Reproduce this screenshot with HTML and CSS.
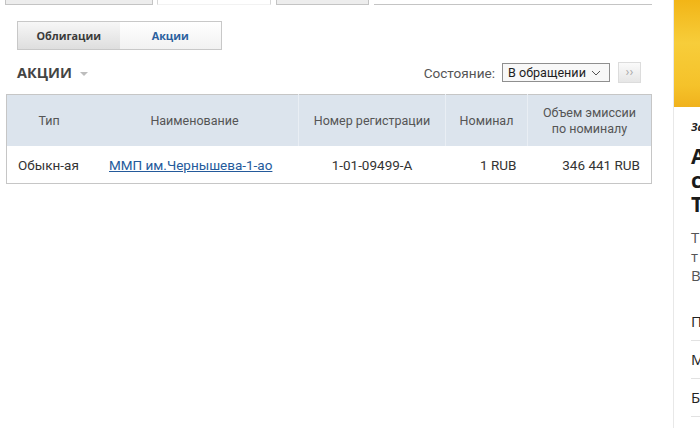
FILE: index.html
```html
<!DOCTYPE html>
<html>
<head>
    <title>Акции</title>
    <link rel="stylesheet" href="styles.css">
</head>
<body>
    <div class="page">
        <div class="main">
            <!-- Top tabs (cut off by the viewport) -->
            <div class="top-tabs">
                <div class="top-tab first"></div>
                <div class="top-tab active"></div>
                <div class="top-tab"></div>
                <div class="top-line"></div>
            </div>

            <!-- Bonds / Shares switch -->
            <div class="switch">
                <div class="switch-item">Облигации</div>
                <div class="switch-item selected">Акции</div>
            </div>

            <!-- Heading and filter -->
            <div class="toolbar">
                <div class="section-title">АКЦИИ <span class="caret"></span></div>
                <div class="filter">
                    <span class="filter-label">Состояние:</span>
                    <div class="select">
                        <span class="select-value">В обращении</span>
                        <svg width="10" height="6" viewBox="0 0 10 6"><path d="M1 1 L5 5 L9 1" fill="none" stroke="#555" stroke-width="1"/></svg>
                    </div>
                    <div class="go-btn">&rsaquo;&rsaquo;</div>
                </div>
            </div>

            <!-- Results table -->
            <table class="issues">
                <thead>
                    <tr>
                        <th class="col-type">Тип</th>
                        <th class="col-name">Наименование</th>
                        <th class="col-reg">Номер регистрации</th>
                        <th class="col-nom">Номинал</th>
                        <th class="col-vol">Объем эмиссии<br>по номиналу</th>
                    </tr>
                </thead>
                <tbody>
                    <tr>
                        <td class="type">Обыкн-ая</td>
                        <td class="name"><a href="#">ММП им.Чернышева-1-ао</a></td>
                        <td class="reg">1-01-09499-A</td>
                        <td class="num">1 RUB</td>
                        <td class="num">346 441 RUB</td>
                    </tr>
                </tbody>
            </table>
        </div>

        <!-- Side banner / news column -->
        <div class="aside">
            <div class="banner"></div>
            <div class="aside-body">
                <div class="logo">За</div>
                <div class="aside-title">А<br>с<br>Т</div>
                <div class="aside-text">Т<br>т<br>В</div>
                <ul class="aside-list">
                    <li>П</li>
                    <li>М</li>
                    <li>Б</li>
                    <li>С</li>
                </ul>
            </div>
        </div>
    </div>
</body>
</html>
```

FILE: styles.css
```css
/* General Styles */
body {
    margin: 0;
    padding: 0;
    background-color: #ffffff;
    font-family: Roboto, "Noto Sans", sans-serif;
    color: #333333;
}

.page {
    display: flex;
    width: 700px;
    height: 428px;
    overflow: hidden;
}

.main {
    width: 646px;
    padding-left: 6px;
    flex-shrink: 0;
}

/* Top tabs, only their lower edge is visible */
.top-tabs {
    display: flex;
    align-items: flex-end;
    height: 5px;
    overflow: hidden;
    margin-left: -1px;
}

.top-tab {
    height: 30px;
    width: 93px;
    border: 1px solid #c4c4c4;
    background-color: #ededed;
    margin-right: 5px;
    box-sizing: border-box;
}

.top-tab.first {
    width: 148px;
    margin-right: 4px;
}

.top-tab.active {
    width: 114px;
    background-color: #ffffff;
    border-color: #d6d6d6;
    border-bottom-color: #f2f2f2;
}

.top-line {
    flex: 1;
    height: 1px;
    background-color: #c4c4c4;
}

/* Switch */
.switch {
    display: flex;
    width: 205px;
    height: 29px;
    margin: 16px 0 0 11px;
    border: 1px solid #c8c8c8;
    box-sizing: border-box;
}

.switch-item {
    flex: 1;
    display: flex;
    align-items: center;
    justify-content: center;
    font-family: "Open Sans", sans-serif;
    font-weight: bold;
    font-size: 10.8px;
    color: #3a3a3a;
    background: linear-gradient(#f7f7f7, #dedede);
}

.switch-item.selected {
    color: #2b5f9e;
    background: linear-gradient(#ffffff, #f1f1f1);
}

/* Toolbar */
.toolbar {
    display: flex;
    justify-content: space-between;
    align-items: center;
    height: 33px;
    margin-top: 6px;
    padding-left: 11px;
    padding-right: 11px;
}

.section-title {
    font-family: "Open Sans", sans-serif;
    font-weight: bold;
    font-size: 14.5px;
    color: #444444;
    display: flex;
    align-items: center;
}

.caret {
    display: inline-block;
    margin-left: 8px;
    margin-top: 2px;
    border-left: 4px solid transparent;
    border-right: 4px solid transparent;
    border-top: 4px solid #bdbdbd;
}

.filter {
    display: flex;
    align-items: center;
}

.filter-label {
    font-size: 13.6px;
    color: #555555;
    margin-right: 7px;
}

.select {
    display: flex;
    align-items: center;
    justify-content: space-between;
    width: 108px;
    height: 19px;
    padding: 0 8px 0 5px;
    box-sizing: border-box;
    border: 1px solid #8f8f8f;
    background-color: #f8f8f8;
    font-size: 12.6px;
    color: #1e1e1e;
    white-space: nowrap;
}

.select-value {
    flex-shrink: 0;
}

.select svg {
    flex-shrink: 0;
}

.go-btn {
    width: 23px;
    height: 21px;
    margin-left: 8px;
    box-sizing: border-box;
    border: 1px solid #dcdcdc;
    background: linear-gradient(#fafafa, #e6e6e6);
    color: #a8a8a8;
    font-size: 13px;
    line-height: 18px;
    text-align: center;
}

/* Table */
.issues {
    width: 646px;
    margin-top: 5px;
    border-collapse: collapse;
    border: 1px solid #c6c6c6;
    font-size: 13.5px;
}

.issues th {
    height: 51px;
    padding: 0;
    background-color: #dce4ed;
    font-weight: normal;
    font-size: 12.5px;
    line-height: 16px;
    color: #555555;
    text-align: center;
    border-left: 1px solid #e9eef4;
}

.issues th.col-type,
.issues th.col-name {
    border-left: none;
}

.col-type { width: 84px; }
.col-name { width: 207px; }
.col-reg { width: 146px; }
.col-nom { width: 81px; }

.issues td {
    height: 37px;
    padding: 0;
    color: #333333;
}

.issues td.type {
    padding-left: 11px;
}

.issues td.name {
    padding-left: 18px;
}

.issues td.name a {
    color: #245a9b;
    text-decoration: underline;
}

.issues td.reg {
    text-align: center;
}

.issues td.num {
    text-align: right;
    padding-right: 11px;
}

/* Side column */
.aside {
    flex: 1;
    margin-left: 21px;
    border-left: 1px solid #e8e8e8;
    overflow: hidden;
}

.banner {
    height: 107px;
    background: linear-gradient(#f2b517, #f7cd3a 40%, #f5c22a 80%, #f0b21d);
}

.aside-body {
    padding-left: 17px;
    white-space: nowrap;
}

.logo {
    margin-top: 12px;
    font-family: "Open Sans", sans-serif;
    font-weight: bold;
    font-style: italic;
    font-size: 11px;
    color: #222222;
}

.aside-title {
    margin-top: 10px;
    font-family: "Open Sans", sans-serif;
    font-weight: bold;
    font-size: 21px;
    line-height: 24px;
    color: #1a1a1a;
}

.aside-text {
    margin-top: 12px;
    font-family: "Open Sans", sans-serif;
    font-size: 15px;
    line-height: 19px;
    color: #555555;
}

.aside-list {
    list-style: none;
    margin: 18px 0 0 0;
    padding: 0;
    font-family: "Open Sans", sans-serif;
    font-size: 15px;
    color: #222222;
}

.aside-list li {
    height: 37px;
    line-height: 36px;
    border-bottom: 1px solid #e2e2e2;
}
```
